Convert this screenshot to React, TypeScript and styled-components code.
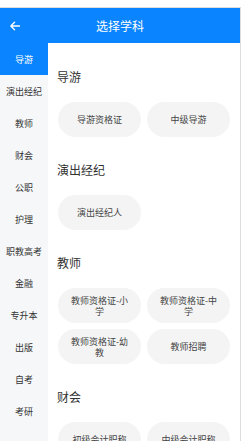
import React from "react";
import styled, { createGlobalStyle } from "styled-components";

const Global = createGlobalStyle`
  html, body { margin: 0; padding: 0; background: #fff; }
  body { font-family: "Noto Sans CJK SC", "Noto Sans", sans-serif; }
  * { box-sizing: border-box; }
`;

const Frame = styled.div`
  width: 241px;
  height: 434px;
  margin-top: 7px;
  border-top: 1px solid #dcdcdc;
  border-right: 1px solid #dcdcdc;
  display: flex;
  flex-direction: column;
  overflow: hidden;
`;

const Header = styled.div`
  height: 35px;
  flex: none;
  background: #0a84ff;
  display: flex;
  align-items: center;
  justify-content: center;
  position: relative;
  color: #fff;
  font-size: 12px;
`;

const Back = styled.div`
  position: absolute;
  left: 9px;
  top: 12px;
  width: 12px;
  height: 12px;
  display: flex;
`;

const Body = styled.div`
  flex: 1;
  display: flex;
  min-height: 0;
`;

const Sidebar = styled.div`
  width: 48px;
  flex: none;
  background: #f6f7f9;
  display: flex;
  flex-direction: column;
`;

const SideItem = styled.div<{ $active?: boolean }>`
  height: 32px;
  flex: none;
  display: flex;
  align-items: center;
  justify-content: center;
  font-size: 9px;
  white-space: nowrap;
  color: ${(p) => (p.$active ? "#fff" : "#333")};
  background: ${(p) => (p.$active ? "#0a84ff" : "transparent")};
`;

const Main = styled.div`
  flex: 1;
  padding: 26px 9px 0 10px;
  background: #fff;
`;

const Section = styled.div`
  margin-bottom: 25px;
`;

const Title = styled.div`
  font-size: 12px;
  line-height: 16px;
  height: 16px;
  color: #333;
  margin-bottom: 17px;
  margin-left: -1px;
`;

const Chips = styled.div`
  display: grid;
  grid-template-columns: 83px 83px;
  gap: 6px;
`;

const Chip = styled.div`
  height: 35px;
  border-radius: 18px;
  background: #f4f4f4;
  color: #444;
  font-size: 9px;
  line-height: 11px;
  display: flex;
  align-items: center;
  justify-content: center;
  text-align: center;
  padding: 0 11px;
`;

const sideItems = [
  "导游",
  "演出经纪",
  "教师",
  "财会",
  "公职",
  "护理",
  "职教高考",
  "金融",
  "专升本",
  "出版",
  "自考",
  "考研",
];

const sections: { title: string; items: string[] }[] = [
  { title: "导游", items: ["导游资格证", "中级导游"] },
  { title: "演出经纪", items: ["演出经纪人"] },
  {
    title: "教师",
    items: ["教师资格证-小学", "教师资格证-中学", "教师资格证-幼教", "教师招聘"],
  },
  { title: "财会", items: ["初级会计职称", "中级会计职称"] },
];

export default function App() {
  return (
    <>
      <Global />
      <Frame>
        <Header>
          <Back>
            <svg width="12" height="12" viewBox="0 0 12 12" fill="none">
              <path
                d="M10.5 6H1.8M5.6 2.2L1.8 6l3.8 3.8"
                stroke="#fff"
                strokeWidth="1.3"
                strokeLinecap="round"
                strokeLinejoin="round"
              />
            </svg>
          </Back>
          选择学科
        </Header>
        <Body>
          <Sidebar>
            {sideItems.map((s, i) => (
              <SideItem key={s} $active={i === 0}>
                {s}
              </SideItem>
            ))}
          </Sidebar>
          <Main>
            {sections.map((sec) => (
              <Section key={sec.title}>
                <Title>{sec.title}</Title>
                <Chips>
                  {sec.items.map((it) => (
                    <Chip key={it}>{it}</Chip>
                  ))}
                </Chips>
              </Section>
            ))}
          </Main>
        </Body>
      </Frame>
    </>
  );
}
